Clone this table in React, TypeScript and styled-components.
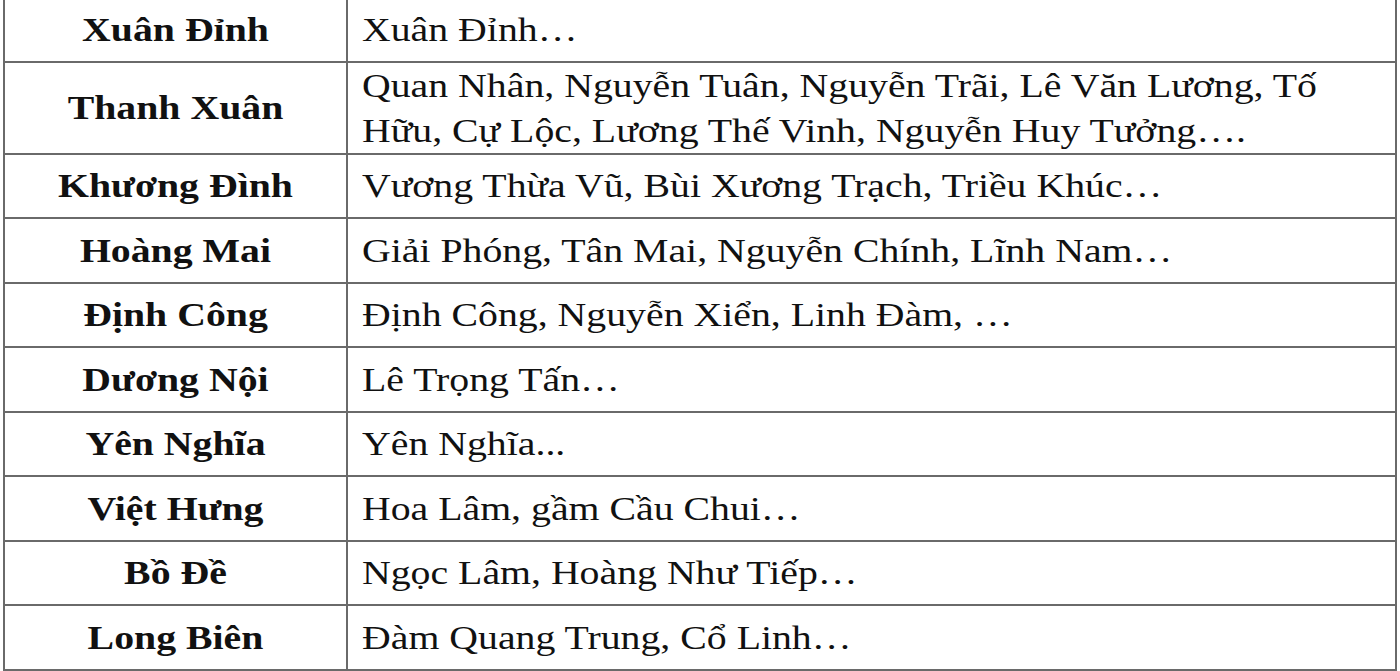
import styled, { createGlobalStyle } from "styled-components";

type Area = { name: string; streets: string };

const areas: Area[] = [
  { name: "Xuân Đỉnh", streets: "Xuân Đỉnh…" },
  {
    name: "Thanh Xuân",
    streets:
      "Quan Nhân, Nguyễn Tuân, Nguyễn Trãi, Lê Văn Lương, Tố Hữu, Cự Lộc, Lương Thế Vinh, Nguyễn Huy Tưởng….",
  },
  { name: "Khương Đình", streets: "Vương Thừa Vũ, Bùi Xương Trạch, Triều Khúc…" },
  { name: "Hoàng Mai", streets: "Giải Phóng, Tân Mai, Nguyễn Chính, Lĩnh Nam…" },
  { name: "Định Công", streets: "Định Công, Nguyễn Xiển, Linh Đàm, …" },
  { name: "Dương Nội", streets: "Lê Trọng Tấn…" },
  { name: "Yên Nghĩa", streets: "Yên Nghĩa..." },
  { name: "Việt Hưng", streets: "Hoa Lâm, gầm Cầu Chui…" },
  { name: "Bồ Đề", streets: "Ngọc Lâm, Hoàng Như Tiếp…" },
  { name: "Long Biên", streets: "Đàm Quang Trung, Cổ Linh…" },
];

// the source scan is stretched sideways a little
const STRETCH = 1.17;

const GlobalStyle = createGlobalStyle`
  html, body {
    margin: 0;
    padding: 0;
    background: #ffffff;
    overflow: hidden;
  }
`;

const Page = styled.main`
  width: 1400px;
  height: 671px;
  overflow: hidden;
  padding-left: 3px;
  box-sizing: border-box;
`;

const Table = styled.table`
  width: 1394px;
  margin-top: -4px;
  border-collapse: collapse;
  table-layout: fixed;
  border: 2px solid #6a6a6a;
  font-family: "Liberation Serif", "Times New Roman", serif;
  font-size: 34px;
  line-height: 45px;
  color: #111111;
`;

const Cell = styled.td<{ $head?: boolean }>`
  height: 62.5px;
  padding: 0 14px;
  border: 2px solid #6a6a6a;
  vertical-align: middle;
  text-align: ${({ $head }) => ($head ? "center" : "left")};
  font-weight: ${({ $head }) => ($head ? 700 : 400)};
`;

const Text = styled.span`
  display: block;
  width: calc(100% / ${STRETCH});
  transform: scaleX(${STRETCH});
  transform-origin: left center;
`;

export default function App() {
  return (
    <>
      <GlobalStyle />
      <Page>
        <Table>
          <colgroup>
            <col style={{ width: 343 }} />
            <col />
          </colgroup>
          <tbody>
            {areas.map((a) => (
              <tr key={a.name}>
                <Cell $head>
                  <Text>{a.name}</Text>
                </Cell>
                <Cell>
                  <Text>{a.streets}</Text>
                </Cell>
              </tr>
            ))}
          </tbody>
        </Table>
      </Page>
    </>
  );
}
